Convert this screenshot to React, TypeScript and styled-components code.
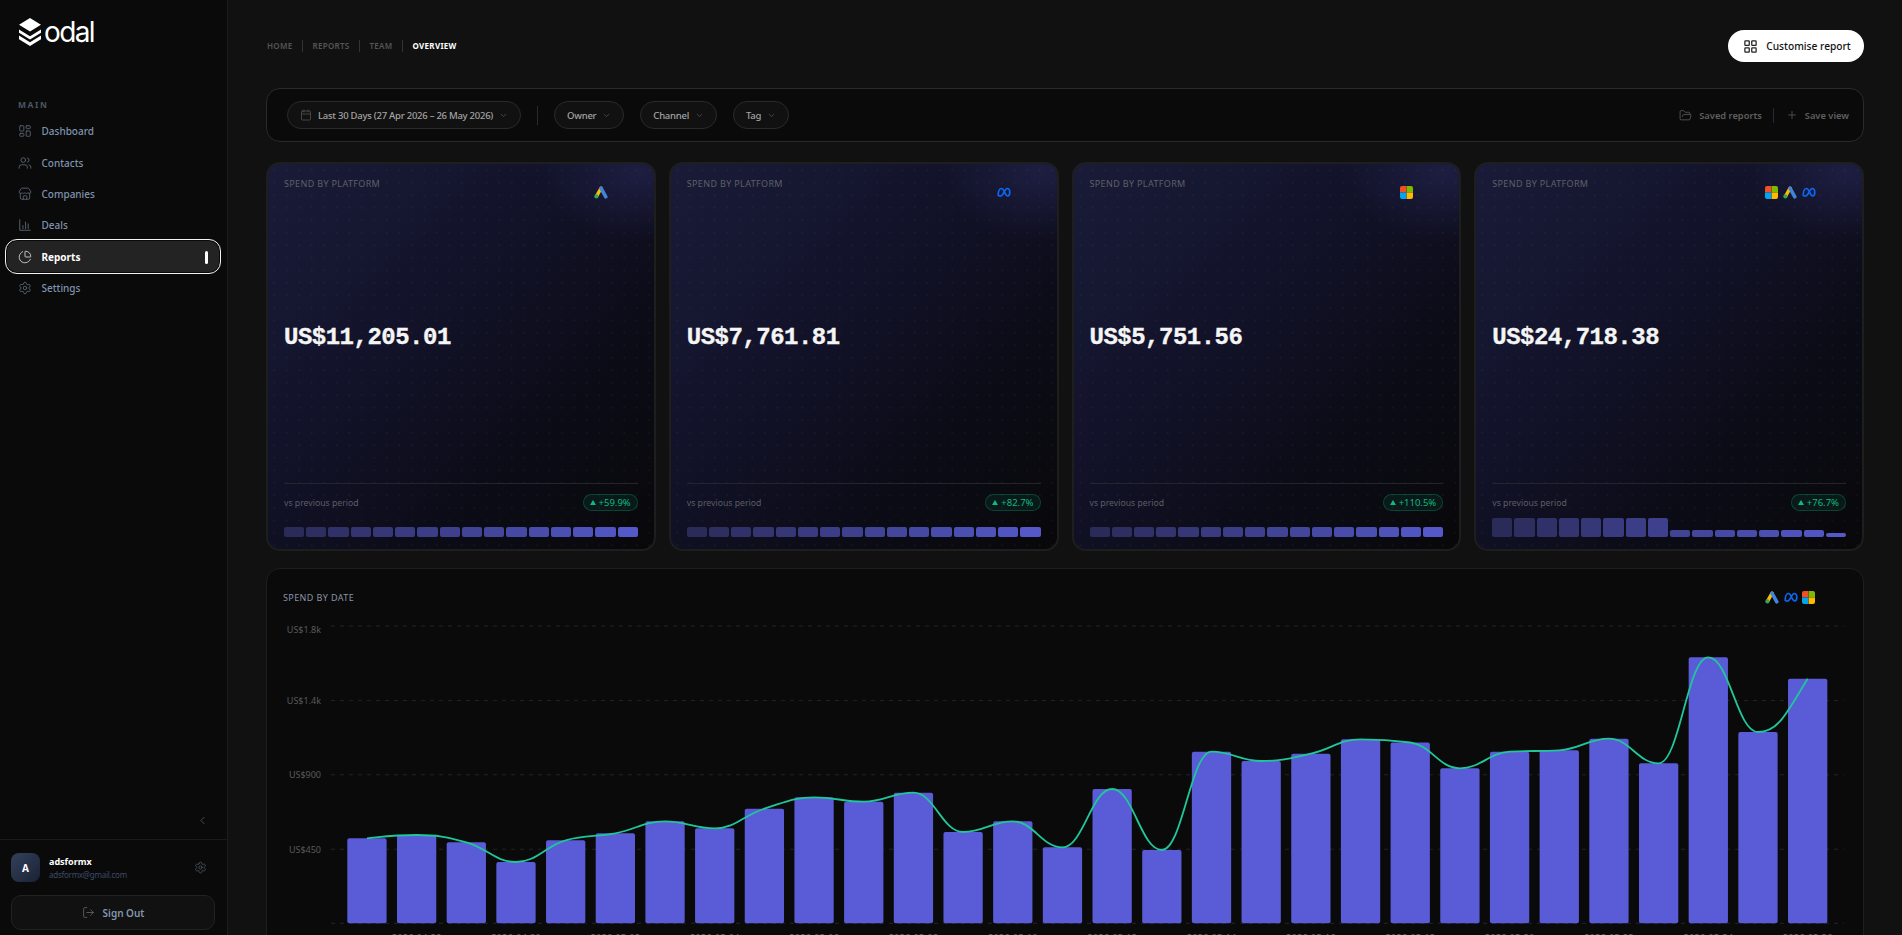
import React from "react";
import styled, { createGlobalStyle } from "styled-components";
import {
  LayoutDashboard, Users, Store, ChartPie, Settings, LayoutGrid, Calendar,
  FolderOpen, Plus, ChevronDown, ChevronLeft, LogOut,
} from "lucide-react";

const Global = createGlobalStyle`
  html, body { margin: 0; height: 100%; overflow: hidden; background: #111; }
  #root { height: 100%; }
  * { box-sizing: border-box; }
  body { font-family: "Noto Sans", "Open Sans", sans-serif; }
`;

const Shell = styled.div`display: flex; height: 935px; background: #111; overflow: hidden;`;

const Sidebar = styled.aside`
  width: 228px; flex: none; height: 935px; background: #0a0a0a;
  border-right: 1px solid #1c1c1c; display: flex; flex-direction: column;
`;
const Brand = styled.div`display: flex; align-items: center; gap: 2px; height: 29px; margin: 18px 0 0 18px;`;
const BrandName = styled.span`
  font-family: "Inter", sans-serif; font-size: 28px; font-weight: 400; color: #fff;
  letter-spacing: -1.6px; line-height: 29px; margin-top: -1px;
`;
const SectionLabel = styled.div`
  margin: 52px 0 0 18px; font-size: 8.5px; font-weight: 700; letter-spacing: 1.6px;
  color: #4b5563; line-height: 12px; height: 12px;
`;
const Nav = styled.nav`display: flex; flex-direction: column; margin: 4.5px 0 0 5px; width: 216px;`;
const NavItem = styled.div<{ $active?: boolean }>`
  position: relative; height: 31.4px; display: flex; align-items: center; gap: 9.5px;
  padding-left: 13px; font-size: 10px; font-weight: ${p => (p.$active ? 700 : 500)};
  color: ${p => (p.$active ? "#fff" : "#7f93ad")};
  svg { color: ${p => (p.$active ? "#d8d8d8" : "#5d6675")}; flex: none; position: relative; }
  span { position: relative; }
  ${p => p.$active && `
    &::before {
      content: ""; position: absolute; inset: -2px 0; border: 1px solid #f2f2f2;
      border-radius: 12px; background: #232323; box-shadow: inset 0 0 0 1px #0a0a0a;
    }
    &::after {
      content: ""; position: absolute; right: 13px; top: 9.5px; width: 3px; height: 13px;
      background: #fff; border-radius: 2px;
    }
  `}
`;
const Spacer = styled.div`flex: 1;`;
const CollapseRow = styled.div`display: flex; justify-content: flex-end; padding: 0 18px 12px 0; color: #555b66;`;
const UserRow = styled.div`
  border-top: 1px solid #1a1a1a; display: flex; align-items: center;
  padding: 13px 20px 13px 11px; gap: 9px; color: #4f5662;
`;
const Avatar = styled.div`
  width: 29px; height: 29px; border-radius: 8px; flex: none; display: flex; align-items: center; justify-content: center;
  background: linear-gradient(135deg, #33415a, #1a2236); color: #fff; font-size: 10px; font-weight: 700;
`;
const UserInfo = styled.div`flex: 1; display: flex; flex-direction: column; gap: 1px;`;
const UserName = styled.div`font-size: 9px; font-weight: 700; color: #fff; line-height: 13px;`;
const UserMail = styled.div`font-size: 8px; letter-spacing: -.25px; color: #3d4a68; line-height: 12px;`;
const SignOut = styled.div`
  margin: 0 12px 5px 11px; height: 35px; border: 1px solid #222; border-radius: 10px; background: #111;
  display: flex; align-items: center; justify-content: center; gap: 8px;
  font-size: 10px; font-weight: 600; color: #8496ad; svg { color: #666; }
`;

const Main = styled.main`flex: 1; min-width: 0; height: 935px; overflow: hidden; padding: 30px 38px 0; display: flex; flex-direction: column;`;
const TopBar = styled.div`display: flex; align-items: center; justify-content: space-between; height: 32px; flex: none;`;
const Crumbs = styled.div`display: flex; align-items: center; margin-left: 1px;`;
const Crumb = styled.span<{ $current?: boolean }>`
  font-size: 8px; font-weight: ${p => (p.$current ? 700 : 600)}; letter-spacing: .3px; line-height: 12px;
  color: ${p => (p.$current ? "#fff" : "#555")}; padding: 0 9.5px;
  & + & { border-left: 1px solid #333; }
  &:first-child { padding-left: 0; }
`;
const CustomiseButton = styled.div`
  width: 136px; height: 32px; border-radius: 16px; background: #fff; color: #111; font-size: 10.2px; font-weight: 500;
  display: flex; align-items: center; justify-content: center; gap: 8px; padding-left: 2px; svg { color: #222; }
`;
const FilterBar = styled.div`
  flex: none; margin-top: 26px; height: 54px; background: #0a0a0a; border: 1px solid #2a2a2a; border-radius: 14px;
  display: flex; align-items: center; padding: 0 14px 0 20px;
`;
const Chip = styled.div`
  height: 28px; border: 1px solid #2a2a2a; border-radius: 14px; background: #111; display: flex; align-items: center;
  padding: 0 12px; gap: 6px; font-size: 9.5px; letter-spacing: -.25px; font-weight: 500; color: #a3a3a3; margin-right: 16px;
  svg { color: #555; flex: none; }
`;
const VSep = styled.div`width: 1px; height: 19px; background: #2a2a2a; margin-right: 16px;`;
const FilterSpacer = styled.div`flex: 1;`;
const GhostAction = styled.div`
  display: flex; align-items: center; gap: 7px; font-size: 9.3px; font-weight: 600; color: #5f5f5f; svg { color: #5f5f5f; }
`;
const ActionSep = styled.div`width: 1px; height: 15px; background: #2a2a2a; margin: 0 12px 0 11px;`;

const CardGrid = styled.div`flex: none; margin-top: 20px; display: grid; grid-template-columns: repeat(4, 1fr); gap: 13px;`;
const Card = styled.section`
  height: 389px; border: 2px solid #1e1e1e; border-radius: 14px; padding: 0 16px 12px; display: flex; flex-direction: column;
  background:
    radial-gradient(circle, rgba(255,255,255,.05) .8px, transparent 1.1px) 0 0 / 12.5px 12.5px,
    radial-gradient(100px 70px at 96% 2%, rgba(34,34,76,.75), transparent 100%),
    linear-gradient(135deg, #1a1b38 0%, #12132a 38%, #0c0c18 68%, #08080a 100%);
`;
const CardHead = styled.div`display: flex; justify-content: space-between; align-items: flex-start; height: 48px; padding-top: 13px;`;
const CardLabel = styled.div`font-size: 9px; letter-spacing: .35px; color: #5f6068; line-height: 14px;`;
const Logos = styled.div`display: flex; align-items: center; gap: 5px; margin: 9px 30px 0 0;`;
const Value = styled.div`
  flex: 1; display: flex; align-items: center; margin-top: -21px;
  font-family: "Liberation Mono", "DejaVu Sans Mono", monospace; font-weight: 700; font-size: 24px; letter-spacing: -.5px; color: #f5f5f5;
  -webkit-text-stroke: .35px #f5f5f5;
`;
const Compare = styled.div`border-top: 1px solid #24242c; padding-top: 10px; display: flex; align-items: center; justify-content: space-between; height: 28px;`;
const CompareLabel = styled.div`font-size: 8.7px; color: #5c5d66;`;
const Badge = styled.div`
  height: 17px; border-radius: 9px; padding: 0 6px; display: flex; align-items: center; gap: 3px; font-size: 9.5px;
  color: #10b981; background: rgba(16,185,129,.09); border: 1px solid rgba(16,185,129,.27);
`;
const Tri = styled.i`width: 0; height: 0; border: 3px solid transparent; border-top: 0; border-bottom: 5.5px solid #10b981;`;
const Mini = styled.div`margin-top: 7px; height: 19px; display: flex; align-items: flex-end; gap: 2px;`;
const MiniBar = styled.div`flex: 1; border-radius: 2px;`;

const ChartPanel = styled.section`
  flex: none; margin-top: 17px; height: 420px; background: #0a0a0a; border: 1px solid #1e1e1e; border-radius: 14px;
`;
const ChartHead = styled.div`display: flex; justify-content: space-between; align-items: center; height: 46px; padding: 10px 48px 0 16px;`;
const ChartTitle = styled.div`font-size: 9px; letter-spacing: .4px; color: #8a93a8;`;
const ChartLogos = styled(Logos)`margin: 0; gap: 4.5px;`;
const ChartSvg = styled.svg`display: block;`;

const AdsIcon = () => (
  <svg width="14" height="13" viewBox="0 0 14 13">
    <path d="M7 2.2 2.9 9.6" stroke="#fbbc04" strokeWidth="3.4" strokeLinecap="round" />
    <path d="M7 2.2l4.8 8.6" stroke="#4285d8" strokeWidth="3.6" strokeLinecap="round" />
    <circle cx="2.4" cy="10.4" r="2.1" fill="#34a853" />
  </svg>
);
const MetaIcon = () => (
  <svg width="14" height="13" viewBox="0 0 14 13" fill="none">
    <path d="M1.2 9C1.2 5.5 2.6 2.5 4.5 2.5c2.6 0 3.6 7.5 6 7.5 1.3 0 2.3-1 2.3-3.4 0-2.4-1-4.1-2.6-4.1C7.6 2.5 6.4 10 3.4 10 2 10 1.2 9.8 1.2 9Z"
      stroke="#0a68f5" strokeWidth="1.7" strokeLinejoin="round" />
  </svg>
);
const MsIcon = () => (
  <svg width="13" height="13" viewBox="0 0 13 13">
    <path d="M2 0h4.4v6.4H0V2a2 2 0 0 1 2-2Z" fill="#f25022" />
    <path d="M6.6 0H11a2 2 0 0 1 2 2v4.4H6.6Z" fill="#7fba00" />
    <path d="M0 6.6h6.4V13H2a2 2 0 0 1-2-2Z" fill="#00a4ef" />
    <path d="M6.6 6.6H13V11a2 2 0 0 1-2 2H6.6Z" fill="#ffb900" />
  </svg>
);
const DealsIcon = () => (
  <svg width="14" height="14" viewBox="0 0 24 24" fill="none" stroke="currentColor" strokeWidth="1.6" strokeLinecap="round">
    <path d="M3 3v18h18" /><path d="M8.5 18v-5" /><path d="M13 18V7" /><path d="M17.5 18v-8" />
  </svg>
);

const navItems = [
  { label: "Dashboard", icon: <LayoutDashboard size={14} strokeWidth={1.5} /> },
  { label: "Contacts", icon: <Users size={14} strokeWidth={1.5} /> },
  { label: "Companies", icon: <Store size={14} strokeWidth={1.5} /> },
  { label: "Deals", icon: <DealsIcon /> },
  { label: "Reports", icon: <ChartPie size={14} strokeWidth={1.5} />, active: true },
  { label: "Settings", icon: <Settings size={14} strokeWidth={1.5} /> },
];

const even = [10, 10, 10, 10, 10, 10, 10, 10, 10, 10, 10, 10, 10, 10, 10, 10];
const cards = [
  { value: "US$11,205.01", delta: "+59.9%", logos: [<AdsIcon key="a" />], bars: even },
  { value: "US$7,761.81", delta: "+82.7%", logos: [<MetaIcon key="m" />], bars: even },
  { value: "US$5,751.56", delta: "+110.5%", logos: [<MsIcon key="s" />], bars: even },
  { value: "US$24,718.38", delta: "+76.7%", logos: [<MsIcon key="s" />, <AdsIcon key="a" />, <MetaIcon key="m" />], bars: [19, 19, 19, 19, 19, 19, 19, 19, 7, 7, 7, 7, 7, 7, 7, 4] },
];

const mix = (i: number, n: number) => {
  const t = i / (n - 1);
  const c = (a: number, b: number) => Math.round(a + (b - a) * t);
  return `rgb(${c(43, 84)},${c(43, 88)},${c(90, 200)})`;
};

const tops = [838.3, 835, 842.3, 862, 840.3, 833.3, 821.3, 828.3, 808.7, 797.3, 801.7, 792.7, 832, 821.3, 847.3, 789, 850, 751.7, 761, 753.7, 739.3, 742.5, 768.3, 751.7, 750.3, 738.7, 763.3, 657.3, 732, 678.7];
const ORIGIN_X = 267;
const ORIGIN_Y = 615;
const BASE = 923.3;
const PITCH = 49.68;
const BAR_X = 347.3;
const BAR_W = 39.3;
const gridYs = [626, 700.4, 774.8, 849.2, 923.3];
const ticks = [
  { label: "US$1.8k", y: 632.8 },
  { label: "US$1.4k", y: 703.8 },
  { label: "US$900", y: 778 },
  { label: "US$450", y: 852.6 },
];
const dates = ["04-28", "04-30", "05-02", "05-04", "05-06", "05-08", "05-10", "05-12", "05-14", "05-16", "05-18", "05-20", "05-22", "05-24", "05-26"];

function smoothPath(xs: number[], ys: number[]) {
  const n = xs.length;
  const h = xs[1] - xs[0];
  const m: number[] = [];
  for (let i = 1; i < n - 1; i++) {
    const s0 = (ys[i] - ys[i - 1]) / h;
    const s1 = (ys[i + 1] - ys[i]) / h;
    const p = (s0 + s1) / 2;
    m[i] = (Math.sign(s0) + Math.sign(s1)) * Math.min(Math.abs(s0), Math.abs(s1), 0.5 * Math.abs(p));
  }
  m[0] = (3 * (ys[1] - ys[0]) / h - m[1]) / 2;
  m[n - 1] = (3 * (ys[n - 1] - ys[n - 2]) / h - m[n - 2]) / 2;
  const k = h * 0.42;
  let d = `M${xs[0]} ${ys[0]}`;
  for (let i = 0; i < n - 1; i++) {
    d += `C${xs[i] + k} ${ys[i] + m[i] * k} ${xs[i + 1] - k} ${ys[i + 1] - m[i + 1] * k} ${xs[i + 1]} ${ys[i + 1]}`;
  }
  return d;
}

const Chart = () => {
  const centers = tops.map((_, i) => BAR_X + PITCH * i + BAR_W / 2 - ORIGIN_X);
  const lineYs = tops.map(t => t - ORIGIN_Y);
  return (
    <ChartSvg width="1596" height="358" viewBox="0 0 1596 358">
      {gridYs.map(y => (
        <line key={y} x1={331 - ORIGIN_X} x2={1844 - ORIGIN_X} y1={y - ORIGIN_Y} y2={y - ORIGIN_Y} stroke="#232323" strokeDasharray="4 5" />
      ))}
      {ticks.map(t => (
        <text key={t.label} x={321 - ORIGIN_X} y={t.y - ORIGIN_Y} textAnchor="end" fontSize="9" fill="#5a5a5a" fontFamily="Noto Sans, sans-serif">{t.label}</text>
      ))}
      {tops.map((t, i) => (
        <rect key={i} x={BAR_X + PITCH * i - ORIGIN_X} y={t - ORIGIN_Y} width={BAR_W} height={BASE - t} rx="2" fill="#5a5bd6" />
      ))}
      <path d={smoothPath(centers, lineYs)} fill="none" stroke="#1fc79a" strokeWidth="1.8" />
      {dates.map((d, i) => (
        <text key={d} x={centers[i * 2 + 1]} y={941 - ORIGIN_Y} textAnchor="middle" fontSize="9.5" fill="#666" fontFamily="Noto Sans, sans-serif">{`2026-${d}`}</text>
      ))}
    </ChartSvg>
  );
};

export default function App() {
  return (
    <Shell>
      <Global />
      <Sidebar>
        <Brand>
          <svg width="24" height="29" viewBox="0 0 24 29">
            <path d="M12 0 23 6.7 12 13.4 1 6.7Z" fill="#fff" />
            <path d="M1 11.6 12 18.2 23 11.6v3.2L12 21.4 1 14.8Z" fill="#fff" />
            <path d="M1 17.6 12 24.2 23 17.6v3.6L12 28 1 21.2Z" fill="#fff" />
          </svg>
          <BrandName>odal</BrandName>
        </Brand>
        <SectionLabel>MAIN</SectionLabel>
        <Nav>
          {navItems.map(n => (
            <NavItem key={n.label} $active={n.active}>{n.icon}<span>{n.label}</span></NavItem>
          ))}
        </Nav>
        <Spacer />
        <CollapseRow><ChevronLeft size={13} strokeWidth={1.5} /></CollapseRow>
        <UserRow>
          <Avatar>A</Avatar>
          <UserInfo>
            <UserName>adsformx</UserName>
            <UserMail>adsformx@gmail.com</UserMail>
          </UserInfo>
          <Settings size={13} strokeWidth={1.5} />
        </UserRow>
        <SignOut><LogOut size={13} strokeWidth={1.5} />Sign Out</SignOut>
      </Sidebar>
      <Main>
        <TopBar>
          <Crumbs>
            <Crumb>HOME</Crumb><Crumb>REPORTS</Crumb><Crumb>TEAM</Crumb><Crumb $current>OVERVIEW</Crumb>
          </Crumbs>
          <CustomiseButton><LayoutGrid size={15} strokeWidth={2} />Customise report</CustomiseButton>
        </TopBar>
        <FilterBar>
          <Chip><Calendar size={12} strokeWidth={1.5} />Last 30 Days (27 Apr 2026 – 26 May 2026)<ChevronDown size={9} /></Chip>
          <VSep />
          <Chip>Owner<ChevronDown size={9} /></Chip>
          <Chip>Channel<ChevronDown size={9} /></Chip>
          <Chip>Tag<ChevronDown size={9} /></Chip>
          <FilterSpacer />
          <GhostAction><FolderOpen size={13} strokeWidth={1.5} />Saved reports</GhostAction>
          <ActionSep />
          <GhostAction><Plus size={12} strokeWidth={1.5} />Save view</GhostAction>
        </FilterBar>
        <CardGrid>
          {cards.map(c => (
            <Card key={c.value}>
              <CardHead>
                <CardLabel>SPEND BY PLATFORM</CardLabel>
                <Logos>{c.logos}</Logos>
              </CardHead>
              <Value>{c.value}</Value>
              <Compare>
                <CompareLabel>vs previous period</CompareLabel>
                <Badge><Tri />{c.delta}</Badge>
              </Compare>
              <Mini>
                {c.bars.map((h, i) => (
                  <MiniBar key={i} style={{ height: h, background: mix(i, c.bars.length) }} />
                ))}
              </Mini>
            </Card>
          ))}
        </CardGrid>
        <ChartPanel>
          <ChartHead>
            <ChartTitle>SPEND BY DATE</ChartTitle>
            <ChartLogos><AdsIcon /><MetaIcon /><MsIcon /></ChartLogos>
          </ChartHead>
          <Chart />
        </ChartPanel>
      </Main>
    </Shell>
  );
}
